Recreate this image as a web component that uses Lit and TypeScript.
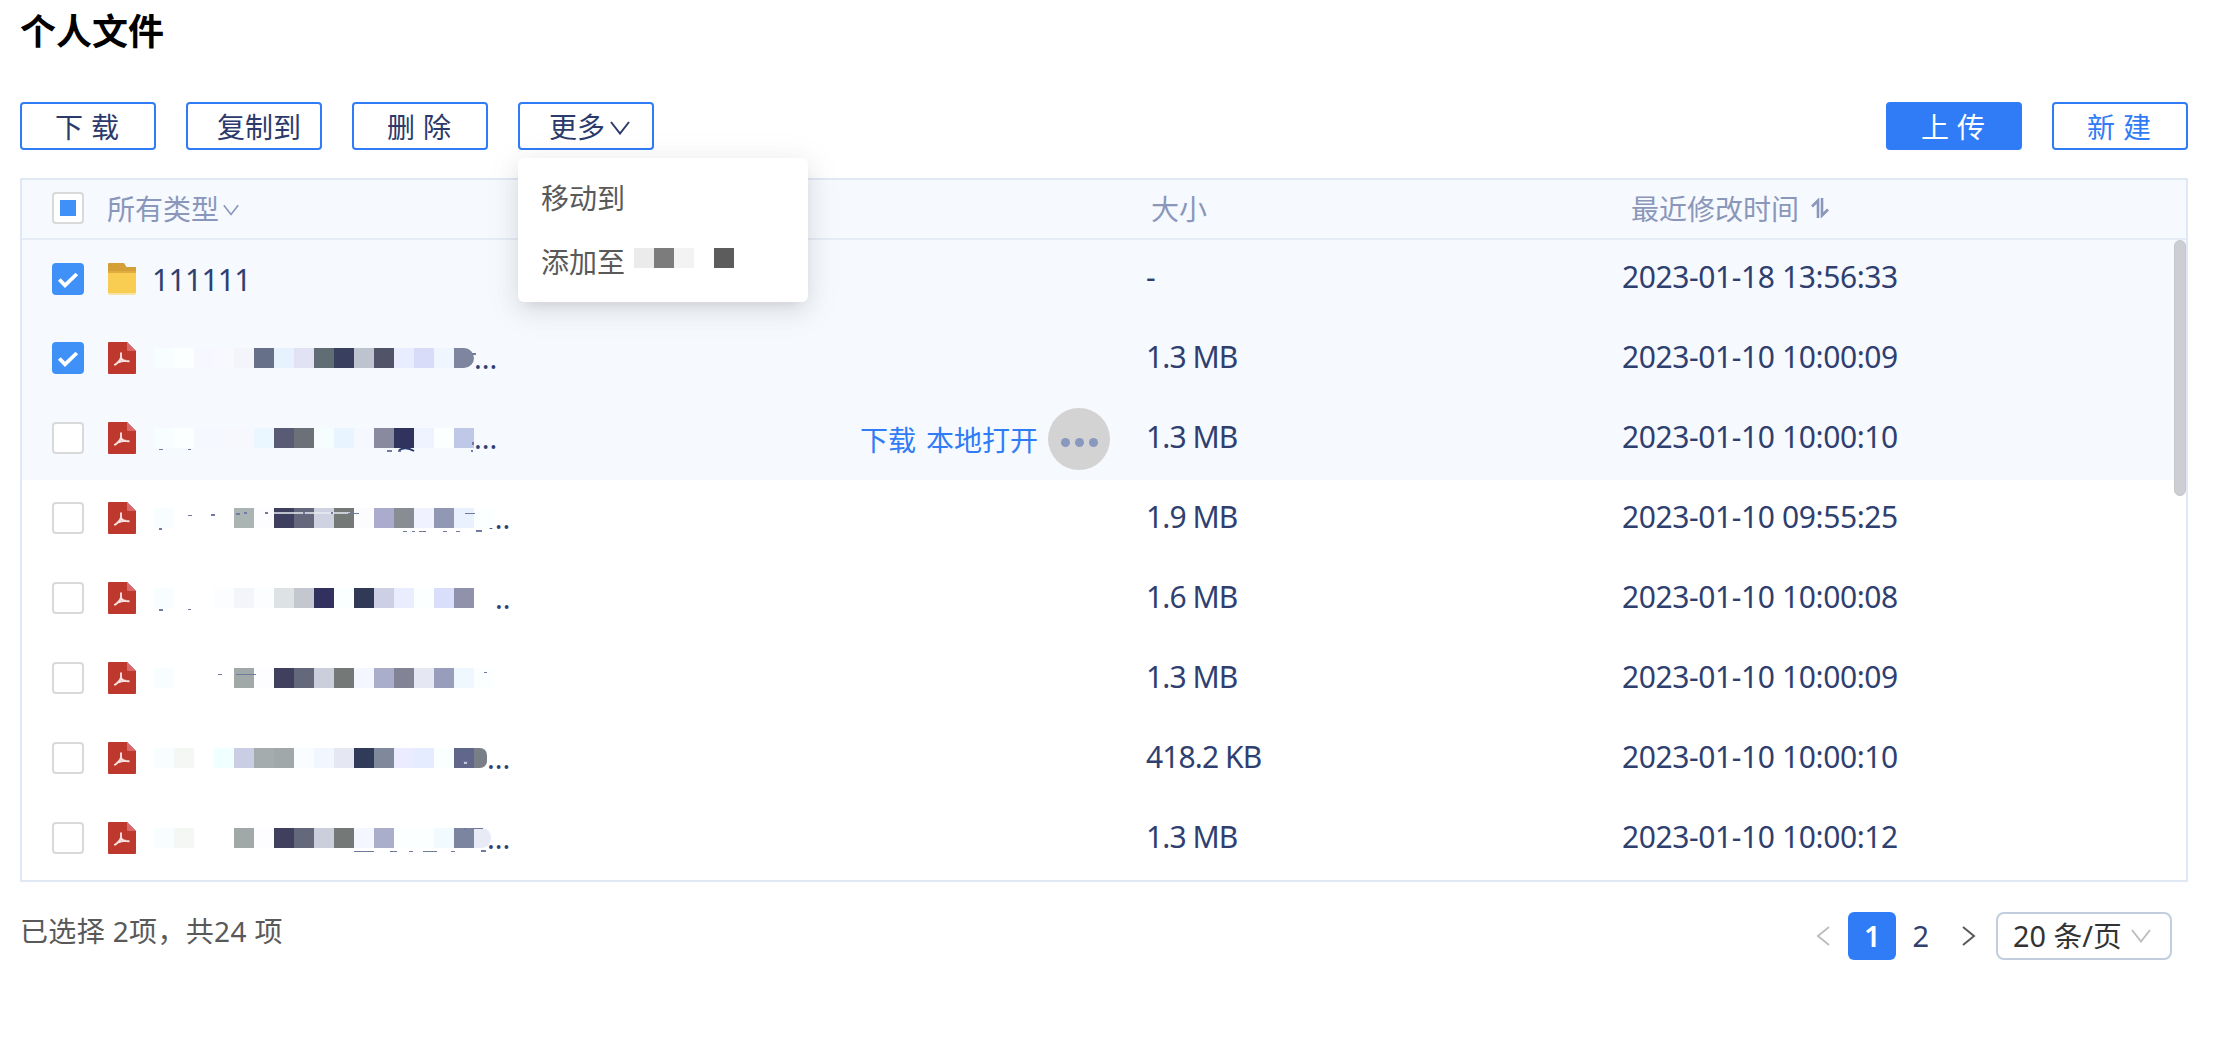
import { LitElement, html, css, svg, nothing } from "lit";
import { customElement } from "lit/decorators.js";
import { classMap } from "lit/directives/class-map.js";
import { styleMap } from "lit/directives/style-map.js";

type Mark = [x: number, y: number, w: number, h: number];

interface FileRow {
  name?: string;
  cells?: string[];
  marks?: Mark[];
  streak?: Mark;
  arc?: string;
  roundEnd?: number;
  endWidth?: number;
  dots?: string;
  nameWidth?: number;
  size: string;
  time: string;
  checked?: boolean;
  hover?: boolean;
}

const ROWS: FileRow[] = [
  { name: "111111", size: "-", time: "2023-01-18 13:56:33", checked: true },
  {
    cells: ["#f6feff", "#fcffff", "#f7f8ff", "#f8f8ff", "#f3f5fb", "#677089", "#e6f3ff", "#e1e3f5", "#606d75", "#39405f", "#bec3d0", "#515368", "#e8eeff", "#d9dcf8", "#eff6ff", "#7d869e"],
    marks: [[318, 5, 4, 2]],
    roundEnd: 10, nameWidth: 320, dots: "...", size: "1.3 MB", time: "2023-01-10 10:00:09", checked: true,
  },
  {
    cells: ["#f6feff", "#fcffff", "#f6f8ff", "#f7f8fe", "#f7f8fe", "#eaf7ff", "#595b74", "#6b7079", "#f6fdff", "#e8f4ff", "#f6f8ff", "#898a9f", "#31335f", "#eef3ff", "#fbffff", "#bfc8e6"],
    marks: [[5, 21, 4, 1], [34, 21, 3, 1], [233, 22, 5, 2], [244, 22, 3, 2], [318, 14, 2, 3], [317, 22, 2, 2]],
    arc: "M245 22Q252 18 260 23",
    nameWidth: 320, dots: "...", size: "1.3 MB", time: "2023-01-10 10:00:10", hover: true,
  },
  {
    cells: ["#f8fdff", "#fff", "#fff", "#fff", "#aab4b3", "#fdfdff", "#3e3e5e", "#65677d", "#cfd2e0", "#747877", "#fcfcff", "#abaccd", "#888c93", "#f0f3ff", "#9198b3", "#e9f1ff", "#fbffff"],
    streak: [120, 4, 76, 2],
    marks: [[5, 20, 3, 2], [34, 7, 4, 1], [57, 6, 4, 2], [82, 5, 4, 2], [90, 4, 3, 2], [111, 4, 3, 2], [149, 4, 2, 2], [177, 4, 2, 2], [194, 5, 11, 1], [249, 23, 4, 1], [258, 23, 3, 1], [265, 23, 7, 1], [289, 23, 4, 1], [302, 23, 4, 1], [322, 22, 6, 2], [311, 5, 10, 1]],
    nameWidth: 333, dots: "...", size: "1.9 MB", time: "2023-01-10 09:55:25",
  },
  {
    cells: ["#f8fdff", "#fff", "#fff", "#fcfdff", "#f3f5fb", "#fbfdff", "#dde2e4", "#c4c7d0", "#31315f", "#faffff", "#303a57", "#cdd0e5", "#e9eeff", "#fbffff", "#d9defa", "#9091ab"],
    marks: [[5, 21, 4, 2], [34, 21, 3, 1]],
    nameWidth: 341, dots: "..", size: "1.6 MB", time: "2023-01-10 10:00:08",
  },
  {
    cells: ["#f8fdff", "#fff", "#fff", "#fff", "#a0a9a8", "#fdfdff", "#403f5d", "#64687b", "#cbcedb", "#747877", "#f4f7ff", "#aaaecb", "#828496", "#e5e8f3", "#989dbb", "#eff7ff", "#fbffff"],
    marks: [[64, 6, 4, 1], [82, 6, 20, 1], [330, 4, 3, 1]],
    nameWidth: 341, size: "1.3 MB", time: "2023-01-10 10:00:09",
  },
  {
    cells: ["#f8fdff", "#f5f7f5", "#fff", "#f0ffff", "#c9cee4", "#a4acae", "#a0a8aa", "#fafdff", "#f1f7ff", "#e5e8f3", "#303a59", "#80889c", "#ebecff", "#e5ecff", "#faffff", "#61668b", "#797e87"],
    marks: [[309, 13, 5, 1]],
    streak: [310, 14, 3, 2],
    roundEnd: 7, endWidth: 13, nameWidth: 333, dots: "...", size: "418.2 KB", time: "2023-01-10 10:00:10",
  },
  {
    cells: ["#f8fdff", "#f5f7f5", "#fff", "#fff", "#a0a9a8", "#fdfdff", "#403f5d", "#64687b", "#cbcedb", "#747877", "#f4f7ff", "#aaaecb", "#fcffff", "#fcffff", "#f1faff", "#7b85a0", "#e8ebf5"],
    marks: [[200, 23, 20, 1], [236, 23, 7, 1], [255, 23, 4, 1], [269, 23, 14, 1], [297, 23, 4, 1], [327, 22, 5, 2], [318, 0, 11, 1], [310, 0, 2, 2]],
    roundEnd: 9, endWidth: 17, nameWidth: 333, dots: "...", size: "1.3 MB", time: "2023-01-10 10:00:12",
  },
];

const chevron = (cls: string) => html`<svg class=${cls} viewBox="0 0 20 14"><path d="M1 1L10 12.5L19 1" /></svg>`;

@customElement("check-box")
export class CheckBox extends LitElement {
  static properties = { state: { type: String } };
  declare state: string;

  static styles = css`
    :host { display: block; width: 32px; height: 32px; flex: none; }
    .box { box-sizing: border-box; width: 32px; height: 32px; border: 2px solid #d9d9d9; border-radius: 4px; background: #fff; display: flex; align-items: center; justify-content: center; }
    .on { background: #3f91f8; border-color: #3f91f8; }
    .dot { width: 16px; height: 16px; background: #3f91f8; }
    svg { width: 28px; height: 28px; fill: none; stroke: #fff; stroke-width: 3.8; flex: none; }
  `;

  render() {
    return html`<div class=${classMap({ box: true, on: this.state === "on" })}>
      ${this.state === "on" ? html`<svg viewBox="0 0 28 28"><path d="M5.3 14.5L11 20.3L22.8 9" /></svg>` : nothing}
      ${this.state === "mixed" ? html`<div class="dot"></div>` : nothing}
    </div>`;
  }
}

@customElement("app-root")
export class AppRoot extends LitElement {
  static styles = css`
    :host { display: block; box-sizing: border-box; height: 1050px; overflow: hidden; background: #fff; color: #2f3f70; font: 28px/40px "Noto Sans", "Noto Sans CJK SC", sans-serif; }
    * { box-sizing: border-box; }
    .page { padding: 0 30px 0 20px; display: flex; flex-direction: column; }
    .title { margin: 3px 0 0; height: 52px; font: 700 36px/52px "Noto Sans CJK SC", sans-serif; color: #000; }
    .bar { display: flex; gap: 30px; margin-top: 47px; height: 48px; }
    .btn { width: 136px; height: 48px; border: 2px solid #307cf6; border-radius: 4px; padding: 0 0 0 29px; display: flex; align-items: center; white-space: nowrap; font: 28px/44px "Noto Sans CJK SC", sans-serif; background: #fff; color: #2b3a6b; position: relative; }
    .pair { padding-left: 33px; gap: 8px; }
    .push { margin-left: auto; }
    .primary { background: #307cf6; color: #fff; }
    .line { color: #307cf6; }
    .chev { fill: none; stroke: currentColor; stroke-width: 2; width: 20px; height: 14px; flex: none; }
    .more { margin-left: 5px; margin-top: 3px; }
    .small { width: 16px; height: 12px; margin-left: 4px; margin-top: 4px; }
    .pale { color: #bfbfbf; margin-left: 9px; }
    .menu { position: absolute; left: -2px; top: 54px; width: 290px; height: 144px; padding: 8px 0; border-radius: 6px; background: #fff; z-index: 3; color: #595959; box-shadow: 0 6px 12px -8px rgba(0,0,0,.12), 0 8px 24px rgba(0,0,0,.09), 0 6px 36px 8px rgba(0,0,0,.04); }
    .item { height: 64px; line-height: 62px; padding: 0 23px; display: flex; }
    .grey { display: flex; margin: 18px 0 0 9px; height: 20px; }
    .cell { width: 20px; height: 20px; flex: none; }
    .table { margin-top: 28px; height: 704px; border: 2px solid #dfe8f4; position: relative; }
    .head, .row { display: grid; grid-template-columns: 1104px 496px 1fr; }
    .head { height: 60px; border-bottom: 2px solid #e6ecf6; background: #f6f9fe; color: #8a97ba; font: 28px/56px "Noto Sans CJK SC", sans-serif; }
    .row { height: 80px; line-height: 74px; font-size: 30px; letter-spacing: -.4px; }
    .tint { background: #f6f9fe; }
    .first { display: flex; align-items: center; padding-left: 30px; }
    .head .first { padding-bottom: 2px; }
    .row .first { padding-bottom: 4px; }
    .hname { margin-left: 23px; }
    .hsize { padding-left: 25px; }
    .htime { padding-left: 9px; display: flex; align-items: center; padding-bottom: 2px; }
    .sort { width: 18px; height: 20px; margin-left: 12px; fill: none; stroke: currentColor; stroke-width: 2.6; }
    .size { padding-left: 20px; letter-spacing: -.9px; }
    .ficon { width: 28px; height: 32px; margin-left: 24px; flex: none; }
    .label { margin-left: 16px; line-height: 76px; letter-spacing: -.7px; padding-top: 2px; }
    .mosaic { position: relative; display: flex; height: 20px; margin-left: 18px; flex: none; }
    .marks { position: absolute; left: 0; top: 0; width: 350px; height: 30px; fill: #6f7ba0; overflow: visible; }
    .streak { fill: #e8ebf0; opacity: .75; }
    .arc { fill: none; stroke: #2b3a6b; stroke-width: 2; }
    .dots { line-height: 76px; font-size: 29px; letter-spacing: 0; }
    .ops { margin-left: auto; display: flex; align-items: center; color: #307cf6; font: 28px/40px "Noto Sans CJK SC", sans-serif; letter-spacing: 0; padding-right: 16px; }
    .op { margin-right: 10px; padding-top: 2px; }
    .round { width: 62px; height: 62px; border-radius: 31px; background: #d3d3d3; display: flex; align-items: center; justify-content: center; gap: 5px; padding-top: 6px; margin-top: 2px; }
    .pip { width: 9px; height: 9px; border-radius: 50%; background: #8b98bd; }
    .thumb { position: absolute; right: 0; top: 60px; width: 12px; height: 256px; border-radius: 6px; background: #cdced3; border: 1px solid #c4c6ca; }
    .foot { display: flex; align-items: flex-start; justify-content: space-between; padding-right: 16px; margin-top: 30px; }
    .sum { color: #595959; line-height: 38px; letter-spacing: .35px; }
    .pager { display: flex; align-items: center; height: 48px; font-size: 29px; }
    .arrow { width: 14px; height: 20px; fill: none; stroke-width: 2; }
    .prev { stroke: #bfbfbf; margin-right: 18px; }
    .next { stroke: #595959; margin: 0 20px 0 33px; }
    .on { width: 48px; height: 48px; line-height: 48px; border-radius: 6px; background: #307cf6; color: #fff; font-weight: 600; text-align: center; }
    .two { margin-left: 16px; }
    .pick { width: 176px; height: 48px; border: 2px solid #c2cddd; border-radius: 8px; padding-left: 15px; display: flex; align-items: center; color: #333; font-size: 28.8px; white-space: nowrap; }
  `;

  private mosaic(r: FileRow) {
    const cells = r.cells!;
    return html`<div class="mosaic" style=${styleMap({ width: `${r.nameWidth}px` })}>
        ${cells.map((c, i) => {
          const last = i === cells.length - 1;
          const st: Record<string, string> = { background: c };
          if (last && r.roundEnd) st.borderRadius = `0 ${r.roundEnd}px ${r.roundEnd}px 0`;
          if (last && r.endWidth) st.width = `${r.endWidth}px`;
          return html`<div class="cell" style=${styleMap(st)}></div>`;
        })}
        <svg class="marks" viewBox="0 0 350 30">
          ${r.streak ? svg`<rect class="streak" x=${r.streak[0]} y=${r.streak[1]} width=${r.streak[2]} height=${r.streak[3]} />` : nothing}
          ${(r.marks ?? []).map(([x, y, w, h]) => svg`<rect x=${x} y=${y} width=${w} height=${h} />`)}
          ${r.arc ? svg`<path class="arc" d=${r.arc} />` : nothing}
        </svg>
      </div>
      ${r.dots ? html`<span class="dots">${r.dots}</span>` : nothing}`;
  }

  private folder() {
    return html`<svg class="ficon" viewBox="0 0 28 32">
      <path fill="#d49f35" d="M0 1Q0 0 1 0H16L18.5 4H28V12H0Z" />
      <path fill="#e0ac42" d="M0 8H28V12H0Z" />
      <path fill="#f8cd52" d="M0 10H28V30H0Z" />
      <path fill="#f9e3a4" d="M0 30H28L27 32H1Z" />
    </svg>`;
  }

  private pdf() {
    return html`<svg class="ficon" viewBox="0 0 28 32">
      <path fill="#bf382e" d="M1 0H19L28 9V31Q28 32 27 32H1Q0 32 0 31V1Q0 0 1 0Z" />
      <path fill="#d9686a" d="M19 0L28 9H20Q19 9 19 8Z" />
      <path fill="none" stroke="#fbe3e1" stroke-width="1.9" d="M13 10.5V15.5Q12.5 19 6.3 23.3M13 15.5Q14.5 19.5 21.5 19.3M9.5 20.5Q14 18.6 18 18.8" />
    </svg>`;
  }

  render() {
    return html`<div class="page">
      <h1 class="title">个人文件</h1>
      <div class="bar">
        <div class="btn pair"><span>下</span><span>载</span></div>
        <div class="btn">复制到</div>
        <div class="btn pair"><span>删</span><span>除</span></div>
        <div class="btn">更多${chevron("chev more")}
          <div class="menu">
            <div class="item">移动到</div>
            <div class="item">添加至
              <div class="grey">
                ${["#ebebeb", "#7c7c7c", "#f3f3f3", "#fff", "#5c5c5c"].map((c) => html`<div class="cell" style=${styleMap({ background: c })}></div>`)}
              </div>
            </div>
          </div>
        </div>
        <div class="btn pair primary push"><span>上</span><span>传</span></div>
        <div class="btn pair line"><span>新</span><span>建</span></div>
      </div>
      <div class="table">
        <div class="head">
          <div class="first"><check-box state="mixed"></check-box><span class="hname">所有类型</span>${chevron("chev small")}</div>
          <div class="hsize">大小</div>
          <div class="htime">最近修改时间<svg class="sort" viewBox="0 0 18 20"><path d="M7 20V2.5L1 8.5M11 0V17.5L17 11.5" /></svg></div>
        </div>
        ${ROWS.map((r) => html`<div class=${classMap({ row: true, tint: !!(r.checked || r.hover) })}>
          <div class="first">
            <check-box state=${r.checked ? "on" : "off"}></check-box>
            ${r.name ? html`${this.folder()}<span class="label">${r.name}</span>` : html`${this.pdf()}${this.mosaic(r)}`}
            ${r.hover ? html`<div class="ops"><span class="op">下载</span><span class="op">本地打开</span><div class="round"><div class="pip"></div><div class="pip"></div><div class="pip"></div></div></div>` : nothing}
          </div>
          <div class="size">${r.size}</div>
          <div class="time">${r.time}</div>
        </div>`)}
        <div class="thumb"></div>
      </div>
      <div class="foot">
        <div class="sum">已选择 2项，共24 项</div>
        <div class="pager">
          <svg class="arrow prev" viewBox="0 0 14 20"><path d="M13 1L2 10L13 19" /></svg>
          <div class="on">1</div>
          <div class="two">2</div>
          <svg class="arrow next" viewBox="0 0 14 20"><path d="M1 1L12 10L1 19" /></svg>
          <div class="pick">20 条/页${chevron("chev pale")}</div>
        </div>
      </div>
    </div>`;
  }
}
